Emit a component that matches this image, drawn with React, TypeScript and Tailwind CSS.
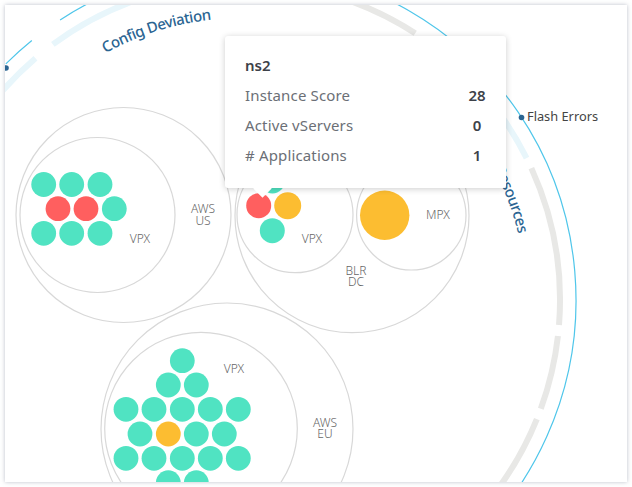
const TEAL = "#50e3c2";
const RED = "#ff5f5f";
const ORANGE = "#fcbd31";

type Ball = [number, number, string?];

const usBalls: Ball[] = [
  [43.7, 184.5], [71.7, 184.5], [100, 184.5],
  [58, 208.7, RED], [86, 208.7, RED], [114.3, 208.7],
  [43.7, 233.3], [71.7, 233.3], [100, 233.3],
];

const euBalls: Ball[] = [
  [182.3, 360.7],
  [168.3, 385], [196.3, 385],
  [126, 409.3], [154, 409.3], [182.3, 409.3], [210.3, 409.3], [238.3, 409.3],
  [140, 434], [168.3, 434, ORANGE], [196.3, 434], [224.3, 434],
  [126, 458.3], [154, 458.3], [182.3, 458.3], [210.3, 458.3], [238.3, 458.3],
  [168.3, 482.7], [196.3, 482.7],
];

const rings: [number, number, number][] = [
  [123.5, 215, 107.5], [97.5, 215, 77.5],
  [352, 215.7, 117], [295, 214.7, 58], [411.3, 215.3, 54.7],
  [227, 429, 126], [201, 428.6, 96.3],
];

const labels: [number, number, string][] = [
  [140, 243, "VPX"], [203, 213, "AWS"], [203, 225, "US"],
  [312, 243, "VPX"], [438, 219, "MPX"], [356, 275, "BLR"], [356, 286, "DC"],
  [234, 373, "VPX"], [325, 427, "AWS"], [325, 438, "EU"],
];

// point on the chart's big circle, angle in degrees clockwise from top
const arc = (r: number, from: number, to: number) => {
  const pt = (a: number) => {
    const t = (a * Math.PI) / 180;
    return `${242 + r * Math.sin(t)} ${300 - r * Math.cos(t)}`;
  };
  return `M${pt(from)} A${r} ${r} 0 0 1 ${pt(to)}`;
};

const Row = ({ label, value }: { label: string; value: string }) => (
  <div className="flex items-center justify-between h-[30px]">
    <span className="text-[#6b6f76] tracking-[0.15px]">{label}</span>
    <span className="w-[20px] text-center font-semibold text-[#3d4149]">{value}</span>
  </div>
);

export default function App() {
  return (
    <div className="w-[632px] h-[487px] bg-white p-[5px] font-['Noto_Sans',sans-serif] overflow-hidden">
      <div className="relative w-[622px] h-[477px] bg-white shadow-[0_0_4px_rgba(120,130,150,0.5)] overflow-hidden">
        <svg width="622" height="477" viewBox="5 5 622 477" className="block">
          <defs>
            <path id="config-path" d={arc(282, -29, 5)} />
            <path id="resources-path" d={arc(284, 62.5, 115)} />
          </defs>

          <path d={arc(334, -45, -39)} fill="none" stroke="#4fc6ea" strokeWidth="1.2" />
          <path d={arc(334, -33, 30)} fill="none" stroke="#4fc6ea" strokeWidth="1.2" />
          <path d={arc(334, 30, 140)} fill="none" stroke="#4fc6ea" strokeWidth="1.2" />

          <path d={arc(318, -52, -40.5)} fill="none" stroke="#e8f6fb" strokeWidth="6" />
          <path d={arc(318, -36.5, 10)} fill="none" stroke="#e8f6fb" strokeWidth="6" />
          <path d={arc(318, 17, 33)} fill="none" stroke="#e8e8e6" strokeWidth="6" />
          <path d={arc(318, 36, 63.5)} fill="none" stroke="#e8f6fb" strokeWidth="6" />
          <path d={arc(318, 65.5, 94.5)} fill="none" stroke="#e8e8e6" strokeWidth="6" />
          <path d={arc(318, 96.5, 110)} fill="none" stroke="#e8e8e6" strokeWidth="6" />
          <path d={arc(318, 112, 130)} fill="none" stroke="#e8e8e6" strokeWidth="6" />

          <text fontSize="15" fontWeight="500" letterSpacing="-0.45" fill="#2b6592">
            <textPath href="#config-path">Config Deviation</textPath>
          </text>
          <text fontSize="15" fontWeight="500" letterSpacing="-0.45" fill="#2b6592">
            <textPath href="#resources-path">Resources</textPath>
          </text>

          {rings.map(([cx, cy, r], i) => (
            <circle key={i} cx={cx} cy={cy} r={r} fill="none" stroke="#d8d8d8" strokeWidth="1.2" />
          ))}

          {usBalls.concat(euBalls).map(([cx, cy, color], i) => (
            <circle key={i} cx={cx} cy={cy} r="12.4" fill={color ?? TEAL} />
          ))}
          <circle cx="272.5" cy="181" r="12.4" fill={TEAL} />
          <circle cx="258.7" cy="205.7" r="12.5" fill={RED} />
          <circle cx="287.7" cy="205.7" r="13.5" fill={ORANGE} />
          <circle cx="272.3" cy="230.7" r="12.5" fill={TEAL} />
          <circle cx="384.7" cy="215.3" r="24.7" fill={ORANGE} />

          {labels.map(([x, y, text], i) => (
            <text key={i} x={x} y={y} fontSize="12" fontWeight="300" fill="#666" textAnchor="middle">{text}</text>
          ))}

          <circle cx="6" cy="68" r="2.8" fill="#2b6592" />
          <circle cx="521.5" cy="117.5" r="2.8" fill="#2b6592" />
          <text x="527" y="120.5" fontSize="12.8" fill="#444">Flash Errors</text>
        </svg>

        <div className="absolute left-[220px] top-[31px] w-[281px] h-[152px] bg-white rounded-[3px] shadow-[0_1px_6px_rgba(0,0,0,0.2)] pl-[20px] pr-[19px] pt-[18px] text-[15px]">
          <div className="h-[26px] font-semibold text-[#3d4149] leading-[22px]">ns2</div>
          <Row label="Instance Score" value="28" />
          <Row label="Active vServers" value="0" />
          <Row label="# Applications" value="1" />
          <div className="absolute left-[31px] top-[146px] w-[13px] h-[13px] bg-white rotate-45" />
        </div>
      </div>
    </div>
  );
}
